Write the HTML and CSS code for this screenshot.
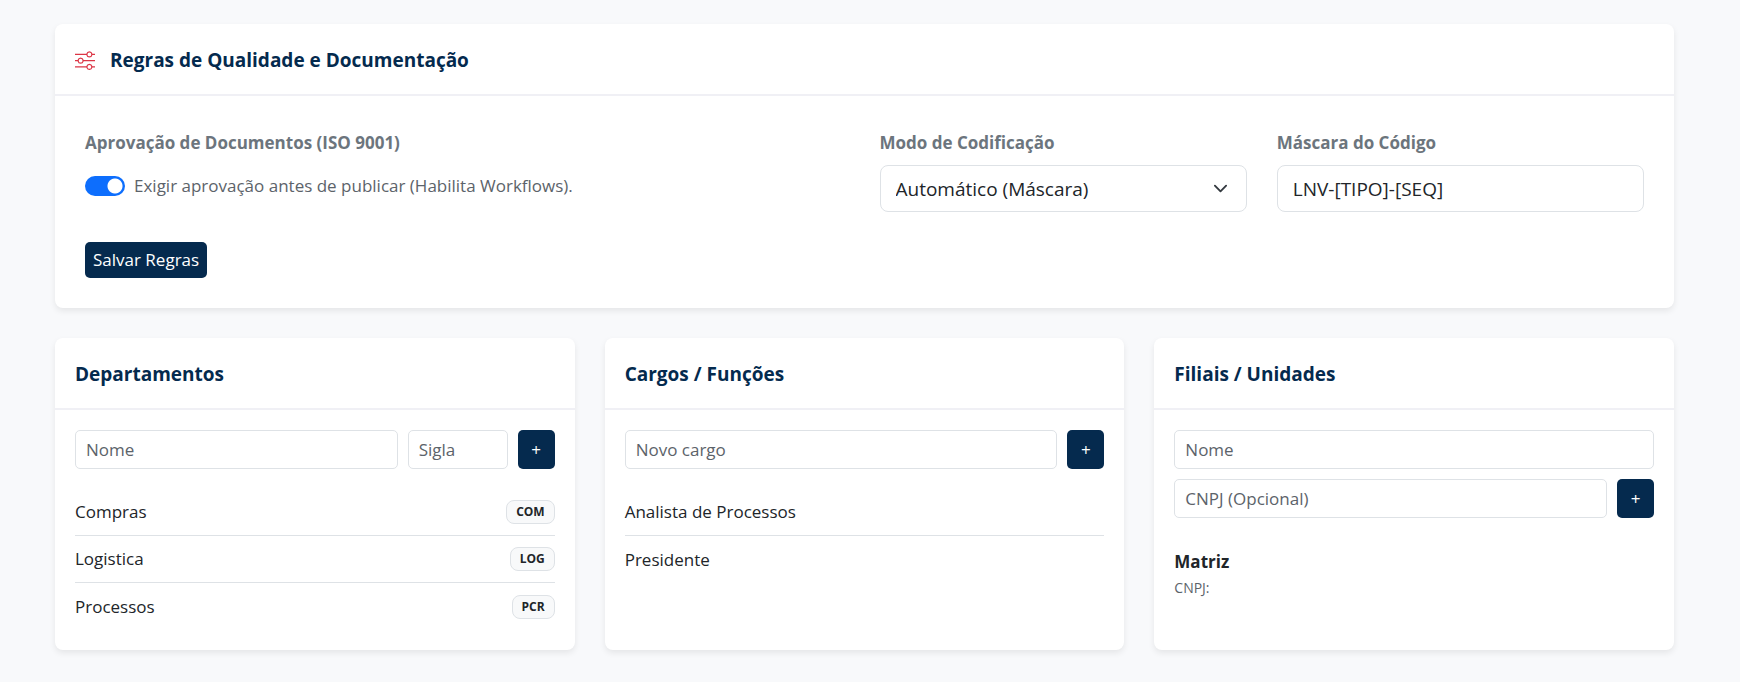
FILE: index.html
```html
<!DOCTYPE html>
<html lang="pt-BR">
<head>
  <meta charset="UTF-8">
  <meta name="viewport" content="width=device-width, initial-scale=1.0">
  <title>Configurações</title>
  <link rel="stylesheet" href="styles.css">
</head>
<body>
  <main class="page">

    <!-- Regras de qualidade -->
    <section class="card">
      <div class="card-header">
        <svg class="header-icon" viewBox="0 0 16 16" fill="currentColor" aria-hidden="true">
          <path fill-rule="evenodd" d="M11.500 2a1.500 1.500 0 1 0 0 3 1.500 1.500 0 0 0 0-3M9.050 3a2.500 2.500 0 0 1 4.900 0H16v1h-2.050a2.500 2.500 0 0 1-4.900 0H0V3zM4.500 7a1.500 1.500 0 1 0 0 3 1.500 1.500 0 0 0 0-3M2.050 8a2.500 2.500 0 0 1 4.900 0H16v1H6.950a2.500 2.500 0 0 1-4.900 0H0V8zm9.450 4a1.500 1.500 0 1 0 0 3 1.500 1.500 0 0 0 0-3m-2.450 1a2.500 2.500 0 0 1 4.900 0H16v1h-2.050a2.500 2.500 0 0 1-4.900 0H0v-1z"/>
        </svg>
        <h2>Regras de Qualidade e Documentação</h2>
      </div>
      <form class="rules">
        <div class="field">
          <span class="label">Aprovação de Documentos (ISO 9001)</span>
          <div class="switch">
            <input type="checkbox" role="switch" id="aprovacao" checked>
            <label for="aprovacao">Exigir aprovação antes de publicar (Habilita Workflows).</label>
          </div>
        </div>
        <div class="field">
          <label class="label" for="modo">Modo de Codificação</label>
          <select class="control select" id="modo">
            <option>Automático (Máscara)</option>
            <option>Manual</option>
          </select>
        </div>
        <div class="field">
          <label class="label" for="mascara">Máscara do Código</label>
          <input class="control" type="text" id="mascara" value="LNV-[TIPO]-[SEQ]">
        </div>
        <div class="actions">
          <button type="button" class="btn">Salvar Regras</button>
        </div>
      </form>
    </section>

    <div class="columns">
      <!-- Departamentos -->
      <section class="card">
        <div class="card-header"><h2>Departamentos</h2></div>
        <div class="card-body">
          <form class="add-form">
            <input class="control small" type="text" placeholder="Nome" aria-label="Nome do departamento">
            <input class="control small sigla" type="text" placeholder="Sigla" aria-label="Sigla">
            <button type="button" class="btn btn-add" aria-label="Adicionar departamento">+</button>
          </form>
          <ul class="list">
            <li>Compras <span class="badge">COM</span></li>
            <li>Logistica <span class="badge">LOG</span></li>
            <li>Processos <span class="badge">PCR</span></li>
          </ul>
        </div>
      </section>

      <!-- Cargos -->
      <section class="card">
        <div class="card-header"><h2>Cargos / Funções</h2></div>
        <div class="card-body">
          <form class="add-form">
            <input class="control small" type="text" placeholder="Novo cargo" aria-label="Novo cargo">
            <button type="button" class="btn btn-add" aria-label="Adicionar cargo">+</button>
          </form>
          <ul class="list">
            <li>Analista de Processos</li>
            <li>Presidente</li>
          </ul>
        </div>
      </section>

      <!-- Filiais -->
      <section class="card">
        <div class="card-header"><h2>Filiais / Unidades</h2></div>
        <div class="card-body">
          <form class="add-form">
            <input class="control small full" type="text" placeholder="Nome" aria-label="Nome da filial">
            <input class="control small" type="text" placeholder="CNPJ (Opcional)" aria-label="CNPJ">
            <button type="button" class="btn btn-add" aria-label="Adicionar filial">+</button>
          </form>
          <ul class="list">
            <li class="branch">
              <strong>Matriz</strong>
              <small>CNPJ:</small>
            </li>
          </ul>
        </div>
      </section>
    </div>

  </main>
</body>
</html>
```
FILE: styles.css
```css
* {
  margin: 0;
  padding: 0;
  box-sizing: border-box;
}
body {
  background: #f8f9fb;
  color: #212529;
  font-family: "Segoe UI", "Open Sans", "Noto Sans", sans-serif;
  font-size: 17px;
  line-height: 26px;
}
input, select, button {
  font: inherit;
  color: inherit;
}
.page {
  display: flex;
  flex-direction: column;
  gap: 30px;
  padding: 24px 66px 32px 55px;
}

/* Cards */
.card {
  background: #fff;
  border-radius: 8px;
  box-shadow: 0 3px 6px rgba(0, 0, 0, 0.08);
}
.card-header {
  display: flex;
  align-items: center;
  gap: 15px;
  height: 72px;
  padding: 2px 20px 0;
  border-bottom: 2px solid #f0f0f5;
}
.card-header h2 {
  color: #042a4e;
  font-size: 19px;
  font-weight: 700;
}
.header-icon {
  width: 20px;
  height: 20px;
  color: #dc3545;
}
.card-body {
  padding: 20px;
}
.columns {
  display: grid;
  grid-template-columns: repeat(3, 1fr);
  gap: 30px;
}

/* Regras */
.rules {
  display: grid;
  grid-template-columns: repeat(4, 1fr);
  gap: 30px;
  padding: 34px 30px 30px;
}
.rules .field:first-child,
.actions {
  grid-column: span 2;
}
.label {
  display: block;
  margin-bottom: 9px;
  color: #6c757d;
  font-weight: 700;
}
.switch {
  display: flex;
  align-items: center;
  gap: 9px;
  padding-top: 8px;
  color: #5c636a;
}
.switch input {
  appearance: none;
  width: 40px;
  height: 20px;
  border-radius: 10px;
  background: #0d6efd radial-gradient(circle, #fff 7px, transparent 8px) right / 20px 20px no-repeat;
}

/* Campos */
.control {
  width: 100%;
  height: 47px;
  padding: 0 15px;
  border: 1px solid #dee2e6;
  border-radius: 8px;
  background: #fff;
  font-size: 19px;
}
.select {
  appearance: none;
  background: #fff url("data:image/svg+xml,%3Csvg xmlns='http://www.w3.org/2000/svg' viewBox='0 0 16 16'%3E%3Cpath fill='none' stroke='%23343a40' stroke-linecap='round' stroke-linejoin='round' stroke-width='2' d='m2 5 6 6 6-6'/%3E%3C/svg%3E") right 18px center / 15px 15px no-repeat;
}
.control.small {
  flex: 1;
  min-width: 0;
  height: 39px;
  padding: 0 10px;
  border-radius: 5px;
  font-size: 17px;
}
.control.sigla {
  flex: 0 0 100px;
}
.control.full {
  flex: 1 0 100%;
}
.control::placeholder {
  color: #5c636a;
  opacity: 1;
}
.btn {
  height: 36px;
  padding: 0 8px;
  border: 0;
  border-radius: 5px;
  background: #052a4e;
  color: #fff;
  cursor: pointer;
}
.btn-add {
  width: 37px;
  height: 39px;
}

/* Listas */
.add-form {
  display: flex;
  flex-wrap: wrap;
  gap: 10px;
  margin-bottom: 20px;
}
.list {
  list-style: none;
}
.list li {
  display: flex;
  align-items: center;
  justify-content: space-between;
  min-height: 47px;
  border-bottom: 1px solid #dee2e6;
}
.list li:last-child {
  border-bottom: 0;
}
.list .branch {
  flex-direction: column;
  align-items: flex-start;
  padding: 11px 0;
}
.branch small {
  color: #5c636a;
  font-size: 14px;
}
.badge {
  padding: 0 9px;
  border: 1px solid #dee2e6;
  border-radius: 8px;
  background: #f8f9fa;
  font-size: 12px;
  font-weight: 700;
  line-height: 22px;
}
```
